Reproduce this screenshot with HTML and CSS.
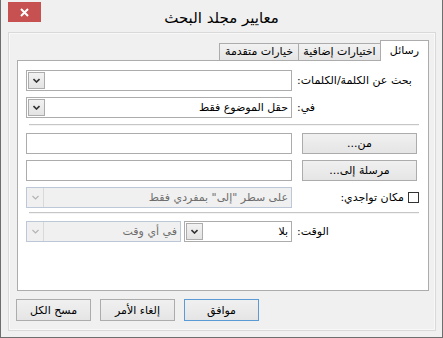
FILE: index.html
```html
<!DOCTYPE html>
<html lang="ar" dir="rtl">
<head>
    <meta charset="UTF-8">
    <meta name="viewport" content="width=device-width, initial-scale=1.0">
    <title>معايير مجلد البحث</title>
    <link rel="stylesheet" href="styles.css">
</head>
<body>
    <div class="window">
        <div class="titlebar">
            <div class="title">معايير مجلد البحث</div>
            <button class="close" aria-label="إغلاق">
                <svg width="9" height="9" viewBox="0 0 9 9"><path d="M1 1L8 8M8 1L1 8" stroke="#fff" stroke-width="2"/></svg>
            </button>
        </div>

        <div class="frame">
            <div class="tabs">
                <div class="tab active">رسائل</div>
                <div class="tab">اختيارات إضافية</div>
                <div class="tab">خيارات متقدمة</div>
            </div>

            <div class="panel">
                <div class="row">
                    <label class="label">بحث عن الكلمة/الكلمات:</label>
                    <div class="combo">
                        <span class="value"></span>
                        <span class="drop"><svg width="7" height="5" viewBox="0 0 7 5"><path d="M0.5 1L3.5 4L6.5 1" fill="none" stroke="#333" stroke-width="1.6"/></svg></span>
                    </div>
                </div>
                <div class="row">
                    <label class="label">في:</label>
                    <div class="combo">
                        <span class="value">حقل الموضوع فقط</span>
                        <span class="drop"><svg width="7" height="5" viewBox="0 0 7 5"><path d="M0.5 1L3.5 4L6.5 1" fill="none" stroke="#333" stroke-width="1.6"/></svg></span>
                    </div>
                </div>

                <div class="sep"></div>

                <div class="row">
                    <button class="btn side">من...</button>
                    <input class="field" type="text">
                </div>
                <div class="row">
                    <button class="btn side">مرسلة إلى...</button>
                    <input class="field" type="text">
                </div>
                <div class="row row-short">
                    <label class="check-label"><span class="check"></span>مكان تواجدي:</label>
                    <div class="combo disabled">
                        <span class="value">على سطر "إلى" بمفردي فقط</span>
                        <span class="drop"><svg width="7" height="5" viewBox="0 0 7 5"><path d="M0.5 1L3.5 4L6.5 1" fill="none" stroke="#b4b4b4" stroke-width="1.2"/></svg></span>
                    </div>
                </div>

                <div class="sep"></div>

                <div class="row">
                    <label class="label">الوقت:</label>
                    <div class="pair">
                        <div class="combo when">
                            <span class="value">بلا</span>
                            <span class="drop"><svg width="7" height="5" viewBox="0 0 7 5"><path d="M0.5 1L3.5 4L6.5 1" fill="none" stroke="#333" stroke-width="1.6"/></svg></span>
                        </div>
                        <div class="combo disabled">
                            <span class="value">في أي وقت</span>
                            <span class="drop"><svg width="7" height="5" viewBox="0 0 7 5"><path d="M0.5 1L3.5 4L6.5 1" fill="none" stroke="#b4b4b4" stroke-width="1.2"/></svg></span>
                        </div>
                    </div>
                </div>
            </div>

            <div class="actions">
                <button class="btn default">موافق</button>
                <button class="btn">إلغاء الأمر</button>
                <button class="btn">مسح الكل</button>
            </div>
        </div>
    </div>
</body>
</html>
```

FILE: styles.css
```css
* {
    box-sizing: border-box;
}
body {
    margin: 0;
    background: #f0f0f0;
    font-family: "DejaVu Sans", sans-serif;
    font-size: 11px;
    color: #000;
}
.window {
    width: 443px;
    height: 338px;
    background: #f0f0f0;
    border: 1px solid #6e6e6e;
    border-top: none;
}
.titlebar {
    height: 32px;
    display: grid;
    grid-template-columns: 1fr auto 1fr;
}
.title {
    grid-column: 2;
    grid-row: 1;
    margin-top: 8px;
    line-height: 20px;
    font-size: 15px;
}
.close {
    grid-column: 3;
    grid-row: 1;
    justify-self: end;
    width: 33px;
    height: 20px;
    margin: 2px 0 0 7px;
    padding: 0;
    border: none;
    background: #c75050;
    display: flex;
    align-items: center;
    justify-content: center;
}

.frame {
    height: 299px;
    margin: 0 6px 0 7px;
    padding: 7px 6px 0 8px;
    border: 1px solid #d9d9d9;
    box-shadow: inset 0 0 0 1px #f8f8f8;
}
.tabs {
    display: flex;
    align-items: flex-end;
    height: 20px;
}
.tab {
    height: 17px;
    line-height: 15px;
    text-align: center;
    border: 1px solid #acacac;
    border-bottom: none;
    border-right: none;
    background: linear-gradient(#f2f2f2, #e5e5e5);
}
.tab:nth-child(2) {
    width: 82px;
}
.tab:nth-child(3) {
    width: 79px;
}
.tab.active {
    position: relative;
    z-index: 1;
    width: 49px;
    height: 21px;
    margin-bottom: -1px;
    line-height: 19px;
    border-right: 1px solid #acacac;
    background: #fff;
}
.panel {
    height: 231px;
    padding: 9px 11px 0 8px;
    background: #fff;
    border: 1px solid #acacac;
}
.row {
    display: grid;
    grid-template-columns: 125px 1fr;
    height: 21px;
    margin-bottom: 6px;
    align-items: center;
}
.row-short {
    margin-bottom: 4px;
}
.label {
    text-align: left;
    padding-left: 5px;
    white-space: nowrap;
}
.sep {
    height: 2px;
    margin: 0 -2px 7px 3px;
    border-top: 1px solid #c6c6c6;
    border-bottom: 1px solid #f4f4f4;
}

.combo {
    display: flex;
    height: 21px;
    border: 1px solid #acacac;
    background: #fff;
}
.combo .value {
    flex: 1;
    padding-right: 3px;
    line-height: 19px;
    white-space: nowrap;
    overflow: hidden;
}
.combo .drop {
    width: 17px;
    margin: 1px;
    border: 1px solid #acacac;
    background: linear-gradient(#f2f2f2, #e3e3e3);
    display: flex;
    align-items: center;
    justify-content: center;
}
.combo.disabled {
    border-color: #bcc7d8;
    background: #f0f0f0;
    color: #6d6d6d;
}
.combo.disabled .drop {
    margin: 0;
    border: none;
    border-right: 1px solid #d9d9d9;
    background: none;
}
.pair {
    display: flex;
    gap: 3px;
}
.pair .combo {
    flex: 1;
}
.pair .combo.when {
    flex: none;
    width: 108px;
}

.field {
    height: 21px;
    margin: 0;
    border: 1px solid #acacac;
    background: #fff;
    font: inherit;
}
.check-label {
    display: flex;
    align-items: center;
    gap: 4px;
    margin-right: -2px;
    white-space: nowrap;
}
.check {
    width: 11px;
    height: 11px;
    border: 1px solid #333;
    background: #fff;
}

.btn {
    height: 22px;
    padding: 0;
    border: 1px solid #acacac;
    background: linear-gradient(#f0f0f0, #e5e5e5);
    font: inherit;
    color: #000;
}
.btn.side {
    width: 115px;
    height: 21px;
}
.btn.default {
    border-color: #5b9bd5;
}
.actions {
    display: flex;
    justify-content: flex-end;
    gap: 9px;
    margin: 8px 0 0 -1px;
}
.actions .btn {
    width: 75px;
}
```
